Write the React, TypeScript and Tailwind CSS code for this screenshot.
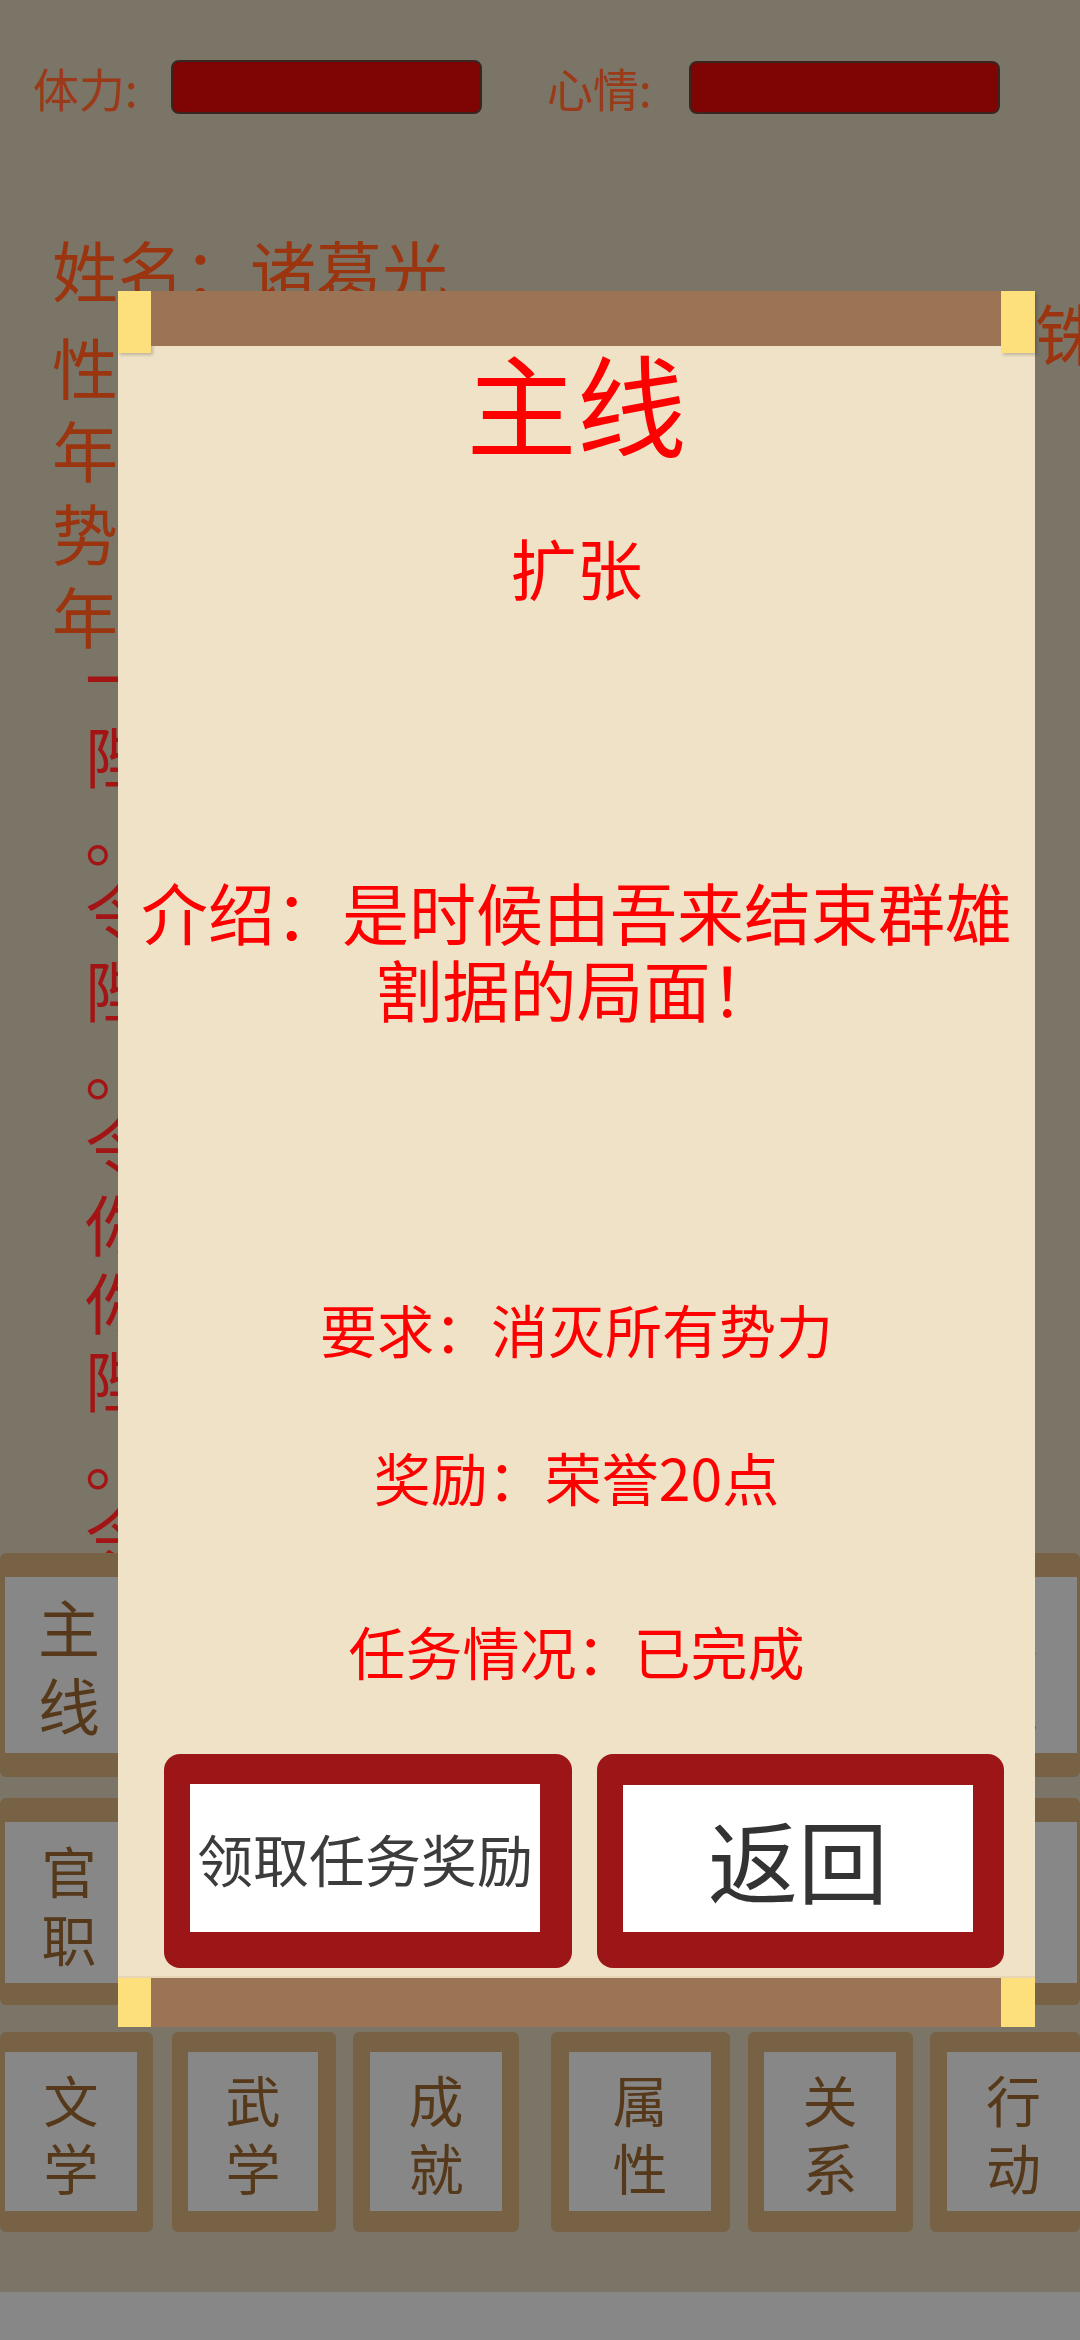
import React from "react";

const navText = "text-[#56391a]";

const NavBox = ({
  label,
  box,
  inner,
  text = "text-[55px] leading-[68px]",
}: {
  label: string;
  box: string;
  inner: string;
  text?: string;
}) => (
  <div className={`flex shrink-0 rounded-[6px] bg-[#786246] ${box}`}>
    <div className={`flex flex-1 flex-col items-center justify-center bg-[#878787] ${inner}`}>
      {label.split("").map((ch, i) => (
        <span key={i} className={`${text} ${navText}`}>
          {ch}
        </span>
      ))}
    </div>
  </div>
);

const story = [
  "一统天下指日可待",
  "陛下圣明",
  "。令尹前来拜见",
  "令人振奋",
  "陛下万岁",
  "。令行禁止",
  "令出必行",
  "你我同心",
  "你且退下",
  "陛下保重",
  "。令人叹服",
  "令旗已下",
];

const Modal = () => (
  <div className="absolute left-[118px] top-[291px] flex h-[1736px] w-[917px] flex-col bg-[#efe2c7]">
    {/* scroll top */}
    <div className="flex h-[55px] items-start">
      <div className="h-[62px] w-[33px] bg-[#fddf7c] shadow-[2px_2px_3px_rgba(0,0,0,0.2)]" />
      <div className="h-[55px] flex-1 bg-[#9b7455]" />
      <div className="h-[62px] w-[34px] bg-[#fddf7c] shadow-[2px_2px_3px_rgba(0,0,0,0.2)]" />
    </div>

    <div className="flex flex-1 flex-col items-center text-center text-[#ff0000]">
      <div className="mt-0 text-[110px] leading-none">主线</div>
      <div className="mt-[77px] text-[66px] leading-none">扩张</div>
      <div className="mt-[273px] w-full px-[20px] text-[67px] leading-[77px]">
        介绍：是时候由吾来结束群雄割据的局面！
      </div>
      <div className="mt-[274px] text-[57px] leading-none">要求：消灭所有势力</div>
      <div className="mt-[91px] text-[57px] leading-none">奖励：荣誉20点</div>
      <div className="mt-[117px] text-[57px] leading-none">任务情况：已完成</div>

      <div className="mt-[75px] flex w-full gap-[25px] pl-[46px] pr-[31px]">
        <button className="flex h-[214px] flex-1 rounded-[16px] bg-[#9c1618] pb-[36px] pl-[26px] pr-[32px] pt-[30px]">
          <span className="flex flex-1 items-center justify-center bg-white text-[56px] text-[#3c3c3c]">
            领取任务奖励
          </span>
        </button>
        <button className="flex h-[214px] flex-1 rounded-[16px] bg-[#9c1618] pb-[36px] pl-[26px] pr-[31px] pt-[31px]">
          <span className="flex flex-1 items-center justify-center bg-white text-[90px] text-[#333333]">
            返回
          </span>
        </button>
      </div>
    </div>

    {/* scroll bottom */}
    <div className="flex h-[51px] border-t-2 border-[#e6d6b6]">
      <div className="w-[33px] bg-[#fddf7c]" />
      <div className="flex-1 bg-[#9b7455]" />
      <div className="w-[34px] bg-[#fddf7c]" />
    </div>
  </div>
);

export default function App() {
  return (
    <div className="relative h-[2340px] w-[1080px] overflow-hidden bg-[#7b7568] font-['Noto_Sans_CJK_SC','Noto_Sans',sans-serif]">
      <div className="flex h-[2292px] flex-col">
        {/* status bar */}
        <div className="flex h-[114px] items-end">
          <div className="flex h-[54px] items-center pl-[33px] text-[46px] text-[#9a3a18]">
            <span className="w-[138px] leading-none">体力:</span>
            <div className="h-[54px] w-[311px] rounded-[8px] border-2 border-[#3a2520] bg-[#7f0404]" />
            <span className="ml-[65px] w-[142px] leading-none">心情:</span>
            <div className="h-[53px] w-[311px] rounded-[8px] border-2 border-[#3a2520] bg-[#7f0404]" />
          </div>
        </div>

        {/* character info */}
        <div className="h-[1439px] overflow-hidden pl-[52px] pt-[112px] text-[66px] text-[#9b3510]">
          <div className="leading-[85px] whitespace-nowrap">姓名：诸葛光</div>
          <div className="mt-[13px] flex justify-between leading-[83px] whitespace-nowrap">
            <span>性别：男</span>
            <span className="-mr-[21px] -mt-[26px] self-start leading-none">铢</span>
          </div>
          <div className="leading-[83px] whitespace-nowrap">年龄：二十五</div>
          <div className="leading-[83px] whitespace-nowrap">势力：诸葛家</div>
          <div className="leading-[83px] whitespace-nowrap">年号：建安</div>
          <div className="-mt-[19px] pl-[33px] text-[#a31414]">
            {story.map((line, i) => (
              <div key={i} className="leading-[78px] whitespace-nowrap">
                {line}
              </div>
            ))}
          </div>
        </div>

        {/* menu rows */}
        <div className="flex h-[224px] justify-between">
          <NavBox
            label="主线"
            box="w-[149px] pl-[5px] pr-[16px] py-[24px]"
            inner=""
            text="text-[62px] leading-[78px]"
          />
          <NavBox
            label="支线"
            box="w-[159px] pl-[16px] pr-[3px] py-[24px]"
            inner=""
            text="text-[62px] leading-[78px]"
          />
        </div>
        <div className="mt-[21px] flex h-[207px] justify-between">
          <NavBox label="官职" box="w-[149px] pl-[5px] pr-[16px] pt-[24px] pb-[22px]" inner="" />
          <NavBox label="俸禄" box="w-[159px] pl-[16px] pr-[3px] pt-[24px] pb-[22px]" inner="" />
        </div>
        <div className="mt-[27px] flex h-[200px]">
          <NavBox label="文学" box="w-[153px] pl-[5px] pr-[16px] pt-[20px] pb-[21px]" inner="" />
          <NavBox label="武学" box="ml-[19px] w-[164px] pl-[16px] pr-[18px] pt-[20px] pb-[21px]" inner="" />
          <NavBox label="成就" box="ml-[17px] w-[166px] px-[17px] pt-[20px] pb-[21px]" inner="" />
          <NavBox label="属性" box="ml-[32px] w-[179px] pl-[18px] pr-[19px] pt-[20px] pb-[21px]" inner="" />
          <NavBox label="关系" box="ml-[18px] w-[165px] pl-[16px] pr-[17px] pt-[20px] pb-[21px]" inner="" />
          <NavBox label="行动" box="ml-[17px] w-[150px] pl-[17px] pt-[20px] pb-[21px]" inner="" />
        </div>
      </div>
      <div className="h-[48px] bg-[#878787]" />

      <Modal />
    </div>
  );
}
